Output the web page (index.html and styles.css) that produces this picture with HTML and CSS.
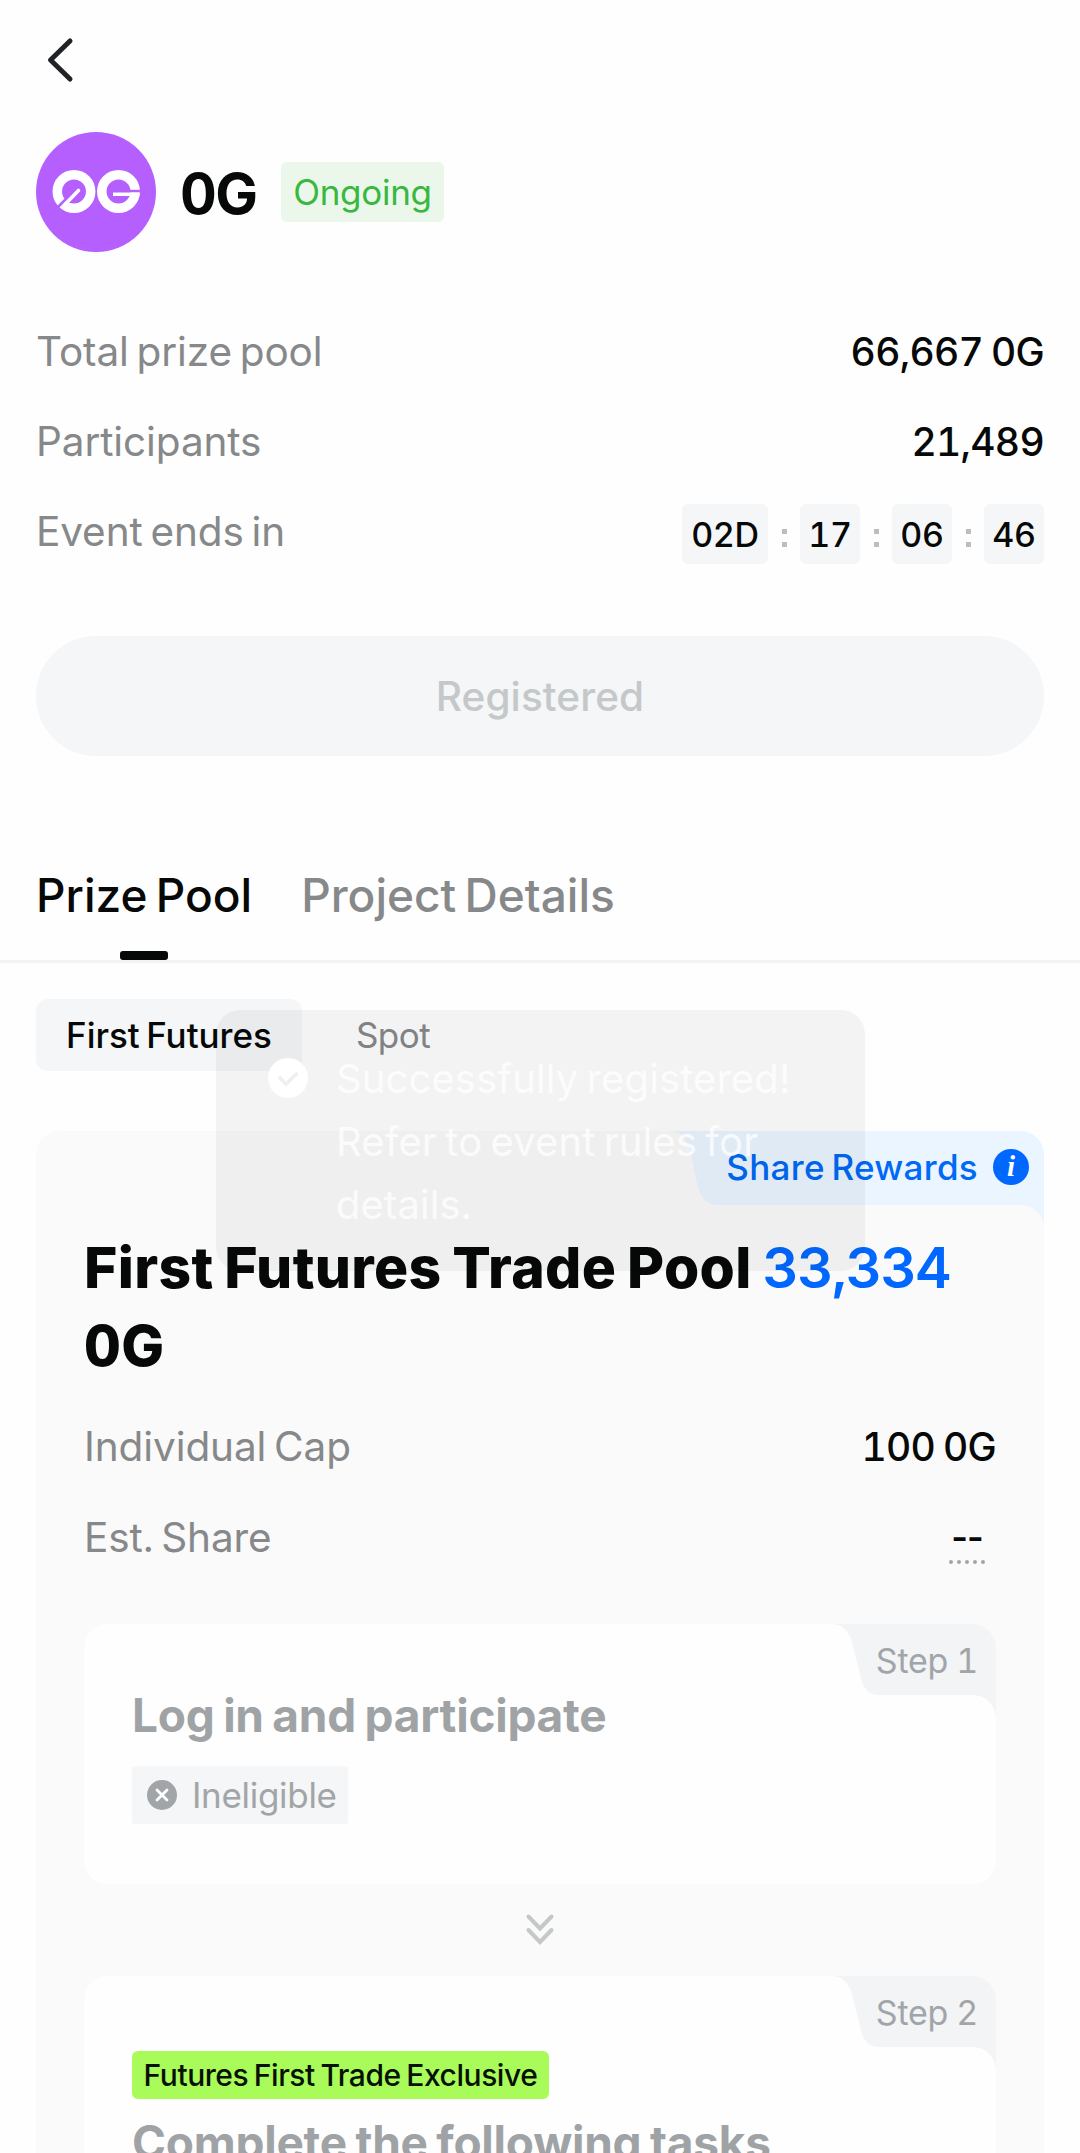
FILE: index.html
```
<!DOCTYPE html>
<html lang="en">
<head>
    <meta charset="UTF-8">
    <meta name="viewport" content="width=device-width, initial-scale=1.0">
    <title>0G Event</title>
    <link rel="stylesheet" href="styles.css">
</head>
<body>
    <div class="page">
        <header class="header">
            <svg class="back-icon" viewBox="0 0 48 48">
                <path d="M34 5 L14.500 24 L34 43"/>
            </svg>
        </header>

        <section class="project">
            <svg class="logo" viewBox="0 0 120 120">
                <circle cx="60" cy="60" r="60" fill="#b65fff"/>
                <g fill="none" stroke="#fff" stroke-width="9.500">
                    <circle cx="38" cy="59.500" r="16.700"/>
                    <circle cx="82.500" cy="59.500" r="16.700"/>
                </g>
                <path d="M21 76 L37 60" stroke="#b65fff" stroke-width="2.500"/>
                <path d="M29 72.500 L42.500 58.500" stroke="#fff" stroke-width="3.600" stroke-linecap="round"/>
                <path d="M93 57.800 H105 V60.500 H93 Z" fill="#b65fff"/>
                <path d="M77 60.500 H103.500 V64 H77 Z" fill="#fff"/>
            </svg>
            <h1 class="project-name">0G</h1>
            <span class="status">Ongoing</span>
        </section>

        <section class="stats">
            <div class="row">
                <span class="label">Total prize pool</span>
                <span class="value">66,667 0G</span>
            </div>
            <div class="row">
                <span class="label">Participants</span>
                <span class="value">21,489</span>
            </div>
            <div class="row">
                <span class="label">Event ends in</span>
                <div class="countdown">
                    <span class="time time-days">02D</span>
                    <span class="colon"></span>
                    <span class="time">17</span>
                    <span class="colon"></span>
                    <span class="time">06</span>
                    <span class="colon"></span>
                    <span class="time">46</span>
                </div>
            </div>
        </section>

        <button class="btn-registered" disabled>Registered</button>

        <nav class="tabs">
            <a class="tab active">Prize Pool</a>
            <a class="tab">Project Details</a>
        </nav>

        <div class="pills">
            <span class="pill active">First Futures</span>
            <span class="pill">Spot</span>
        </div>

        <section class="pool">
            <div class="ribbon">
                <svg class="ribbon-bg" viewBox="0 0 373 98">
                    <path d="M0 0 C11 1 17 8 20 24 L26 52 C29 67 35 74 48 74 H349 C363 74 373 84 373 98 V24 A24 24 0 0 0 349 0 Z"/>
                </svg>
                <span class="ribbon-text">Share Rewards</span>
                <span class="info">i</span>
            </div>

            <h2 class="pool-title">First Futures Trade Pool <span class="amount">33,334</span> 0G</h2>

            <div class="row">
                <span class="label">Individual Cap</span>
                <span class="value">100 0G</span>
            </div>
            <div class="row">
                <span class="label">Est. Share</span>
                <span class="value est">--</span>
            </div>

            <div class="step">
                <div class="step-tab">
                    <svg class="step-tab-bg" viewBox="0 0 163 95">
                        <path d="M0 0 C10 1 17 8 19 18 L27 50 C30 65 35 71 47 71 H139 C153 71 163 81 163 95 V24 A24 24 0 0 0 139 0 Z"/>
                    </svg>
                    <span class="step-label">Step 1</span>
                </div>
                <h3 class="step-title">Log in and participate</h3>
                <span class="ineligible">
                    <svg class="x-icon" viewBox="0 0 30 30">
                        <circle cx="15" cy="15" r="15" fill="#a2a5a7"/>
                        <path d="M10 10 L20 20 M20 10 L10 20" stroke="#fff" stroke-width="2.800" stroke-linecap="round"/>
                    </svg>
                    Ineligible
                </span>
            </div>

            <div class="next">
                <svg class="next-icon" viewBox="0 0 32 36">
                    <path d="M4.500 4.500 L16 16.500 L27.500 4.500 M4.500 18 L16 30 L27.500 18"/>
                </svg>
            </div>

            <div class="step step-second">
                <div class="step-tab">
                    <svg class="step-tab-bg" viewBox="0 0 163 95">
                        <path d="M0 0 C10 1 17 8 19 18 L27 50 C30 65 35 71 47 71 H139 C153 71 163 81 163 95 V24 A24 24 0 0 0 139 0 Z"/>
                    </svg>
                    <span class="step-label">Step 2</span>
                </div>
                <span class="exclusive">Futures First Trade Exclusive</span>
                <h3 class="step-title">Complete the following tasks</h3>
            </div>
        </section>

        <div class="toast">
            <svg class="toast-icon" viewBox="0 0 40 40">
                <circle cx="20" cy="20" r="20" fill="#fff"/>
                <path d="M11 19 L18 26 L29.500 15" fill="none" stroke="#efefef" stroke-width="3.500"/>
            </svg>
            <p class="toast-text">Successfully registered! Refer to event rules for details.</p>
        </div>
    </div>
</body>
</html>
```
FILE: styles.css
```
* {
    margin: 0;
    padding: 0;
    box-sizing: border-box;
}

body {
    font-family: Inter, 'Liberation Sans', sans-serif;
    font-variant-numeric: tabular-nums;
    background: #fefefe;
    color: #070808;
}

.page {
    position: relative;
    width: 1080px;
    height: 2153px;
    overflow: hidden;
}

.header {
    height: 132px;
    padding: 36px;
}

.back-icon {
    display: block;
    width: 48px;
    height: 48px;
    fill: none;
    stroke: #202326;
    stroke-width: 5;
    stroke-linecap: round;
    stroke-linejoin: round;
}

.project {
    display: flex;
    align-items: center;
    height: 120px;
    padding: 0 36px;
}

.logo {
    width: 120px;
    height: 120px;
    margin-right: 24px;
}

.project-name {
    font-size: 57px;
    line-height: 60px;
    font-weight: 700;
    letter-spacing: -1.5px;
    padding-top: 3px;
    width: 101px;
}

.status {
    width: 163px;
    height: 60px;
    line-height: 61px;
    border-radius: 6px;
    background: #eaf7ea;
    color: #38b83e;
    font-size: 35px;
    letter-spacing: -0.3px;
    text-align: center;
}

.stats {
    margin-top: 54px;
    padding: 0 36px;
}

.row {
    display: flex;
    align-items: center;
    justify-content: space-between;
    height: 90px;
}

.label {
    font-size: 40.5px;
    color: #868889;
    letter-spacing: -0.1px;
    word-spacing: -3px;
}

.value {
    font-size: 39px;
    font-weight: 500;
    letter-spacing: -0.7px;
    word-spacing: -2px;
}

.countdown {
    display: flex;
    align-items: center;
    gap: 13.5px;
    margin-top: 6px;
}

.time {
    width: 60px;
    height: 60px;
    line-height: 61px;
    border-radius: 6px;
    background: #f5f6f7;
    font-size: 34px;
    font-weight: 500;
    letter-spacing: -0.3px;
    text-align: center;
}

.time-days {
    width: 86px;
}

.colon {
    width: 5px;
    height: 18px;
    margin-top: 8px;
    border: solid #bdbdbd;
    border-width: 5px 0;
}

.btn-registered {
    display: block;
    width: 1008px;
    height: 120px;
    margin: 60px 36px 0;
    border: none;
    border-radius: 60px;
    background: #f4f6f7;
    color: #c5c8c9;
    font-family: inherit;
    font-size: 40.5px;
    font-weight: 500;
    letter-spacing: 0.1px;
}

.tabs {
    display: flex;
    gap: 49px;
    height: 132px;
    margin-top: 75px;
    padding: 0 36px;
    border-bottom: 3px solid #f2f3f3;
}

.tab {
    position: relative;
    line-height: 128px;
    font-size: 46px;
    font-weight: 500;
    letter-spacing: 0;
    word-spacing: -4px;
    color: #86888a;
}

.tab.active {
    color: #070808;
}

.tab.active::after {
    content: '';
    position: absolute;
    left: 84px;
    top: 120px;
    width: 48px;
    height: 9px;
    border-radius: 3px;
    background: #070808;
}

.pills {
    display: flex;
    gap: 24px;
    margin-top: 36px;
    padding: 0 36px;
}

.pill {
    height: 72px;
    line-height: 73px;
    padding: 0 30px;
    border-radius: 12px;
    font-size: 35px;
    font-weight: 400;
    letter-spacing: -0.5px;
    color: #86888a;
}

.pill.active {
    background: #f4f6f7;
    color: #070808;
    font-weight: 500;
    letter-spacing: 0;
    word-spacing: -3px;
}

.pool {
    position: relative;
    margin: 60px 36px 0;
    padding: 98px 48px 0;
    height: 1100px;
    border-radius: 24px;
    background: #fafafa;
}

.ribbon {
    position: absolute;
    top: 0;
    right: 0;
    width: 373px;
    height: 73px;
    display: flex;
    align-items: center;
    justify-content: flex-end;
    padding-right: 15px;
}

.ribbon-bg {
    position: absolute;
    top: 0;
    left: 0;
    width: 373px;
    height: 98px;
    fill: #eaf5ff;
}

.ribbon-text {
    position: relative;
    font-size: 35px;
    font-weight: 500;
    letter-spacing: 0.3px;
    word-spacing: -3px;
    color: #0069f5;
    margin: -2px 15px 0 0;
}

.info {
    position: relative;
    width: 36px;
    height: 36px;
    margin-top: -1px;
    border-radius: 50%;
    background: #0068ff;
    color: #fff;
    font-family: 'Liberation Serif', serif;
    font-size: 29px;
    font-weight: 700;
    font-style: italic;
    line-height: 35px;
    text-align: center;
}

.pool-title {
    font-size: 57px;
    line-height: 78px;
    font-weight: 800;
    letter-spacing: 0.35px;
    word-spacing: -5px;
    margin-bottom: 16px;
}

.amount {
    color: #0068ff;
    font-size: 56px;
    font-weight: 600;
    letter-spacing: -1.4px;
}

.pool .row {
    height: 91px;
}

.est {
    width: 36px;
    margin-right: 11px;
    padding-top: 3px;
    border-bottom: 4px dotted #a2a5a7;
    font-size: 36px;
    font-variant-numeric: normal;
    font-weight: 600;
    letter-spacing: -1px;
    line-height: 46px;
    text-align: center;
    white-space: nowrap;
}

.step {
    position: relative;
    height: 260px;
    margin-top: 41px;
    padding: 58px 48px 0;
    border-radius: 24px;
    background: #fefefe;
}

.step-tab {
    position: absolute;
    top: 0;
    right: 0;
    width: 163px;
    height: 71px;
}

.step-tab-bg {
    display: block;
    width: 163px;
    height: 95px;
    fill: #f2f4f5;
}

.step-label {
    position: absolute;
    top: 0;
    right: 18px;
    line-height: 73px;
    font-size: 34px;
    letter-spacing: -0.2px;
    word-spacing: -1px;
    color: #a2a5a7;
    white-space: nowrap;
}

.step-title {
    font-size: 46px;
    line-height: 66px;
    font-weight: 700;
    letter-spacing: -0.25px;
    word-spacing: -3.5px;
    color: #a0a3a5;
}

.ineligible {
    display: flex;
    align-items: center;
    width: 216px;
    height: 58px;
    margin-top: 18px;
    padding-left: 15px;
    border-radius: 3px;
    background: #f4f6f7;
    color: #a2a5a7;
    font-size: 35px;
    letter-spacing: -0.3px;
}

.x-icon {
    width: 30px;
    height: 30px;
    margin-right: 15px;
}

.next {
    display: flex;
    align-items: center;
    justify-content: center;
    height: 92px;
}

.next-icon {
    width: 32px;
    height: 36px;
    fill: none;
    stroke: #c5c8c9;
    stroke-width: 4;
    stroke-linecap: round;
}

.step-second {
    margin-top: 0;
    padding-top: 75px;
}

.exclusive {
    display: block;
    width: 417px;
    height: 48px;
    line-height: 49px;
    margin-bottom: 10px;
    border-radius: 6px;
    background: #a8fb58;
    color: #071103;
    font-size: 30px;
    font-weight: 500;
    letter-spacing: -0.45px;
    word-spacing: -2px;
    text-align: center;
}

.toast {
    position: absolute;
    top: 1010px;
    left: 216px;
    display: flex;
    width: 649px;
    height: 261px;
    padding: 37px 50px 0 52px;
    border-radius: 24px;
    background: rgba(0, 0, 0, 0.045);
}

.toast-icon {
    flex: none;
    width: 40px;
    height: 40px;
    margin: 11px 28px 0 0;
}

.toast-text {
    font-size: 40px;
    line-height: 63px;
    letter-spacing: 0.1px;
    word-spacing: -2.5px;
    color: rgba(255, 255, 255, 0.75);
}
```
